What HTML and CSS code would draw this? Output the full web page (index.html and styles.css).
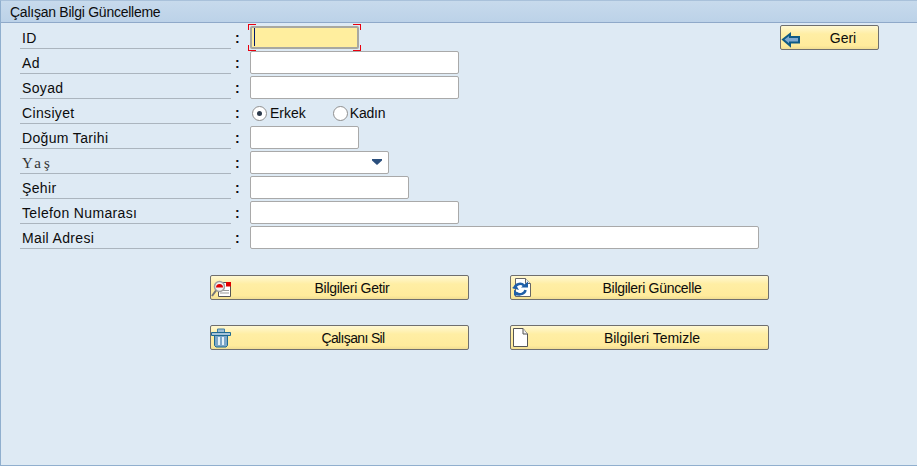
FILE: index.html
```html
<!DOCTYPE html>
<html lang="tr">
<head>
<meta charset="UTF-8" />
<title>Çalışan Bilgi Güncelleme</title>
<link rel="stylesheet" href="styles.css">
</head>
<body>

<div class="window">
  <div class="title">Çalışan Bilgi Güncelleme</div>

  <div class="content">
    <div class="top">
      <form class="fields">
        <div class="lbl">ID</div><div class="colon">:</div>
        <div class="val"><span class="focus"><input class="inp w-s active" type="text" /><i class="caret"></i><i class="c tl"></i><i class="c tr"></i><i class="c bl"></i><i class="c br"></i></span></div>

        <div class="lbl">Ad</div><div class="colon">:</div>
        <div class="val"><input class="inp w-m" type="text" /></div>

        <div class="lbl">Soyad</div><div class="colon">:</div>
        <div class="val"><input class="inp w-m" type="text" /></div>

        <div class="lbl">Cinsiyet</div><div class="colon">:</div>
        <div class="val radios">
          <span class="radio on"></span><span class="radio-text erkek">Erkek</span>
          <span class="radio"></span><span class="radio-text kadin">Kadın</span>
        </div>

        <div class="lbl">Doğum Tarihi</div><div class="colon">:</div>
        <div class="val"><input class="inp w-s" type="text" /></div>

        <div class="lbl mono">Yaş</div><div class="colon">:</div>
        <div class="val"><div class="inp w-d drop"><svg width="10" height="6" viewBox="0 0 10 6"><path d="M0 0h10v1.500L5 6 0 1.500z" fill="#2b4f7d"/></svg></div></div>

        <div class="lbl">Şehir</div><div class="colon">:</div>
        <div class="val"><input class="inp w-c" type="text" /></div>

        <div class="lbl">Telefon Numarası</div><div class="colon">:</div>
        <div class="val"><input class="inp w-m" type="text" /></div>

        <div class="lbl">Mail Adresi</div><div class="colon">:</div>
        <div class="val"><input class="inp w-l" type="text" /></div>
      </form>

      <button class="btn back" type="button">
        <svg class="ico" width="20" height="20" viewBox="0 0 20 20"><path d="M2 11.500l7-5.500v3h9v5.500H9v3z" fill="#7fa8cf" stroke="#0f5a86" stroke-width="2"/></svg>
        <span>Geri</span>
      </button>
    </div>

    <div class="actions">
      <button class="btn" type="button">
        <svg class="ico" width="21" height="20" viewBox="0 0 21 20">
          <path d="M7.500 4.500h12v14h-12z" fill="#fff" stroke="#555"/>
          <path d="M15 4h5v4.500h-5z" fill="#e00000"/>
          <path d="M9 12.500h9M9 15h9" stroke="#999"/>
          <circle cx="8.500" cy="8.500" r="5" fill="#f2f2f2" stroke="#a0a0a0" stroke-width="1.500"/>
          <path d="M5 9.500a3.500 3.500 0 0 1 7 0z" fill="#e00000"/>
          <path d="M5 12.500L1 18" stroke="#777" stroke-width="2"/>
        </svg>
        <span>Bilgileri Getir</span>
      </button>
      <button class="btn" type="button">
        <svg class="ico" width="21" height="20" viewBox="0 0 21 20">
          <path d="M4.500.5h10l5 5v13h-15z" fill="#fff" stroke="#666"/>
          <path d="M14.500.5v5h5" fill="#eee" stroke="#666"/>
          <path d="M3.500 10.500a5.500 5 0 0 1 9.500-3" fill="none" stroke="#1f5fa8" stroke-width="2.500"/>
          <path d="M10 9.500h7v-6zM1 10l4-3 3 5z" fill="#1f5fa8"/>
          <path d="M14.500 12a5.500 5 0 0 1-9 3" fill="none" stroke="#1f5fa8" stroke-width="2.500"/>
          <path d="M3 11.500v6h6.500z" fill="#1f5fa8"/>
        </svg>
        <span>Bilgileri Güncelle</span>
      </button>
      <button class="btn tight" type="button">
        <svg class="ico" width="21" height="20" viewBox="0 0 21 20">
          <path d="M6.500 4.500v-3.500h7v3.500" fill="#9dbdd6" stroke="#3f7da3"/>
          <path d="M3.500 7.500h13v10l-1.500 1.500h-10l-1.500-1.500z" fill="#7ca6c9" stroke="#1f6a90"/>
          <path d="M.5 4.500h19v3h-19z" fill="#a5c3da" stroke="#1f6a90"/>
          <path d="M8 9v8M12 9v8" stroke="#e4f0f8" stroke-width="2"/>
        </svg>
        <span>Çalışanı Sil</span>
      </button>
      <button class="btn loose" type="button">
        <svg class="ico" width="21" height="20" viewBox="0 0 21 20">
          <path d="M2.500.5h9.500l4.500 5.500v12.500h-14z" fill="#fff" stroke="#555"/>
          <path d="M12 .5v5.500h4.500" fill="#f0f0f0" stroke="#555"/>
        </svg>
        <span>Bilgileri Temizle</span>
      </button>
    </div>
  </div>
</div>

</body>
</html>
```

FILE: styles.css
```css
html, body { margin: 0; padding: 0; }
body { font-family: "Liberation Sans", Arial, sans-serif; font-size: 14px; color: #0c0c0c; background: #deeaf4; }

.window { width: 917px; height: 466px; box-sizing: border-box; border: 1px solid #90afce; border-top-color: #a9c1da; border-right: 0; background: #deeaf4; overflow: hidden; }
.title { height: 21px; line-height: 22px; padding-left: 9px; letter-spacing: -.25px; background: linear-gradient(#c7daec, #bcd2e8); border-bottom: 1px solid #8fa9c9; }

.content { padding: 0 0 0 19px; }
.top { display: flex; align-items: flex-start; }

.fields { display: grid; grid-template-columns: 211px 19px 510px; grid-auto-rows: 25px; padding-top: 1px; }
.lbl { padding-left: 2px; line-height: 29px; letter-spacing: .35px; border-bottom: 1px solid #abb5be; box-sizing: border-box; overflow: hidden; }
.mono { font-family: "Liberation Serif", serif; font-size: 15px; letter-spacing: 3px; color: #333; }
.colon { padding-left: 4px; line-height: 29px; font-weight: bold; }
.val { display: flex; align-items: flex-start; padding-top: 2px; }

.inp { height: 23px; box-sizing: border-box; border: 1px solid #a9a9a9; border-radius: 2px; background: #fff; padding: 0; margin: 0; outline: 0; display: block; }
.w-s { width: 109px; }
.w-m { width: 209px; }
.w-c { width: 159px; }
.w-d { width: 139px; }
.w-l { width: 509px; }
.active { background: #ffee9e; border: 2px solid #a8a8a0; }

.focus { display: block; position: relative; }
.caret { position: absolute; left: 4px; top: 2px; width: 1px; height: 18px; background: #00186b; }
.c { position: absolute; width: 7px; height: 5px; border: 0 solid #e8000e; }
.tl { left: -2px; top: -2px; border-width: 1px 0 0 1px; }
.tr { right: -2px; top: -2px; border-width: 1px 1px 0 0; }
.bl { left: -2px; bottom: -2px; border-width: 0 0 1px 1px; }
.br { right: -2px; bottom: -2px; border-width: 0 1px 1px 0; }

.drop { display: flex; align-items: center; justify-content: flex-end; padding-right: 6px; }
.drop svg { margin-top: -2px; }

.radios { align-items: center; padding-top: 3px; height: 22px; }
.radio { width: 15px; height: 15px; box-sizing: border-box; margin-left: 2px; border: 1px solid #8f8f8f; border-radius: 50%; background: #fff; position: relative; }
.radio.on::after { content: ""; position: absolute; left: 4px; top: 4px; width: 5px; height: 5px; border-radius: 50%; background: #2c3a4c; }
.radio-text { margin-left: 3px; }
.erkek { margin-right: 25px; }
.kadin { margin-left: 2px; letter-spacing: -.2px; }

.btn { position: relative; display: flex; align-items: center; justify-content: center; width: 259px; height: 25px; padding: 0 0 0 25px; box-sizing: border-box; border: 1px solid #6f6f6f; border-radius: 2px; background: linear-gradient(#fff8d2 0, #ffeea4 35%, #ffeb9c 85%, #f0dd93 100%); font: 14px "Liberation Sans", Arial, sans-serif; letter-spacing: -.3px; color: #0c0c0c; }
.tight { letter-spacing: -.65px; padding-left: 27px; }
.loose { letter-spacing: 0; }
.ico { position: absolute; left: 0; top: 2px; }
.back { width: 99px; margin-left: 20px; margin-top: 2px; letter-spacing: 0; }
.back span { margin-left: 2px; }

.actions { display: grid; grid-template-columns: 259px 259px; column-gap: 41px; row-gap: 25px; padding: 26px 0 0 190px; }
```
